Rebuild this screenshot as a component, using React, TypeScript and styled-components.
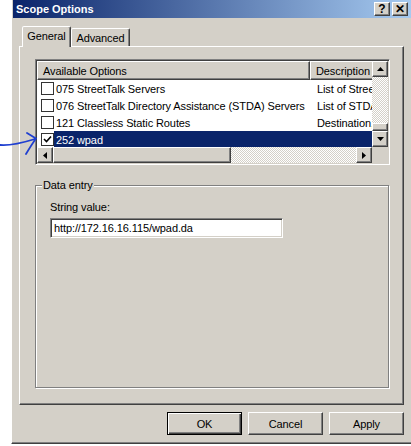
import styled, { createGlobalStyle } from "styled-components";

const GlobalStyle = createGlobalStyle`
  html, body { margin: 0; padding: 0; background: #fff; }
  body {
    font-family: "Liberation Sans", Arial, sans-serif;
    font-size: 11px;
    color: #000;
  }
  * { box-sizing: border-box; }
`;

const raised = `
  background: #d4d0c8;
  border: 1px solid;
  border-color: #fff #404040 #404040 #fff;
  box-shadow: inset -1px -1px #808080;
`;

const sunken = `
  border: 1px solid;
  border-color: #808080 #fff #fff #808080;
  box-shadow: inset 1px 1px #404040, inset -1px -1px #d4d0c8;
  padding: 1px;
`;

const Page = styled.div`
  position: relative;
  width: 411px;
  height: 446px;
  overflow: hidden;
  padding-left: 11px;
`;

const Window = styled.div`
  width: 400px;
  height: 444px;
  background: #d4d0c8;
  border-left: 1px solid #fff;
  border-bottom: 1px solid #404040;
  box-shadow: inset 0 -1px #808080;
  padding-left: 1px;
  display: flex;
  flex-direction: column;
`;

const TitleBar = styled.div`
  height: 18px;
  display: flex;
  align-items: center;
  padding: 0 3px;
  background: linear-gradient(to right, #0a246a, #a6caf0);
`;

const Title = styled.span`
  color: #fff;
  font-weight: bold;
  font-size: 11px;
`;

const TitleButtons = styled.div`
  margin-left: auto;
  display: flex;
  gap: 2px;
`;

const TitleButton = styled.div`
  ${raised}
  width: 16px;
  height: 14px;
  display: flex;
  align-items: center;
  justify-content: center;
  font-weight: bold;
  font-size: 12px;
  line-height: 1;
  padding-bottom: 1px;
`;

const Content = styled.div`
  padding: 8px 7px 0 6px;
  display: flex;
  flex-direction: column;
  letter-spacing: -0.1px;
`;

const TabRow = styled.div`
  height: 20px;
  display: flex;
  align-items: flex-end;
  padding-left: 3px;
`;

const Tab = styled.div<{ $active?: boolean; $w: number }>`
  position: relative;
  z-index: ${(p) => (p.$active ? 1 : 0)};
  width: ${(p) => p.$w}px;
  height: ${(p) => (p.$active ? 21 : 18)}px;
  margin-bottom: ${(p) => (p.$active ? -1 : 0)}px;
  background: #d4d0c8;
  border: 1px solid;
  border-bottom: none;
  border-color: #fff #404040 transparent #fff;
  border-radius: 2px 2px 0 0;
  box-shadow: inset -1px 0 #808080;
  display: flex;
  align-items: center;
  justify-content: center;
  padding-bottom: ${(p) => (p.$active ? 2 : 0)}px;
`;

const Panel = styled.div`
  width: 385px;
  height: 359px;
  background: #d4d0c8;
  border: 1px solid;
  border-color: #fff #404040 #404040 #fff;
  box-shadow: inset -1px -1px #808080;
  padding: 12px 13px 0 15px;
  display: flex;
  flex-direction: column;
`;

const ListView = styled.div`
  ${sunken}
  width: 355px;
  height: 106px;
  display: grid;
  grid-template-columns: 1fr 16px;
  grid-template-rows: 1fr 16px;
`;

const ListBody = styled.div`
  background: #fff;
  overflow: hidden;
  display: flex;
  flex-direction: column;
`;

const HeaderRow = styled.div`
  display: flex;
  height: 19px;
  flex-shrink: 0;
`;

const HeaderCell = styled.div<{ $w: number }>`
  ${raised}
  width: ${(p) => p.$w}px;
  flex-shrink: 0;
  padding-left: 5px;
  display: flex;
  align-items: center;
  white-space: nowrap;
  overflow: hidden;
`;

const Row = styled.div`
  display: flex;
  height: 17px;
  flex-shrink: 0;
`;

const CheckCell = styled.div`
  width: 17px;
  flex-shrink: 0;
  display: flex;
  align-items: center;
  padding-left: 4px;
`;

const Box = styled.div`
  width: 13px;
  height: 13px;
  border: 1px solid #333;
  background: #fff;
  display: flex;
  align-items: center;
  justify-content: center;
`;

const Cell = styled.div<{ $w: number; $pad: number; $sel?: boolean }>`
  width: ${(p) => p.$w}px;
  flex-shrink: 0;
  padding-left: ${(p) => p.$pad}px;
  display: flex;
  align-items: center;
  white-space: nowrap;
  overflow: hidden;
  background: ${(p) => (p.$sel ? "#0a246a" : "transparent")};
  color: ${(p) => (p.$sel ? "#fff" : "#000")};
`;

const VScroll = styled.div`
  display: flex;
  flex-direction: column;
`;

const HScroll = styled.div`
  display: flex;
`;

const ScrollBtn = styled.div`
  ${raised}
  width: 16px;
  height: 16px;
  flex-shrink: 0;
  display: flex;
  align-items: center;
  justify-content: center;
`;

const Track = styled.div`
  flex: 1;
  background: repeating-conic-gradient(#fff 0 25%, #d4d0c8 0 50%) 0 0 / 2px 2px;
`;

const Thumb = styled.div<{ $w?: number; $h?: number }>`
  ${raised}
  flex-shrink: 0;
  width: ${(p) => (p.$w ? `${p.$w}px` : "auto")};
  height: ${(p) => (p.$h ? `${p.$h}px` : "auto")};
`;

const Corner = styled.div`
  background: #d4d0c8;
`;

const GroupBox = styled.div`
  position: relative;
  margin-top: 20px;
  width: 354px;
  height: 203px;
  border: 1px solid #808080;
  box-shadow: inset 1px 1px #fff, 1px 1px #fff;
  padding: 15px 14px;
`;

const GroupTitle = styled.span`
  position: absolute;
  top: -7px;
  left: 6px;
  padding: 0 1px;
  background: #d4d0c8;
  line-height: 13px;
`;

const FieldLabel = styled.div`
  line-height: 13px;
`;

const TextBox = styled.div`
  ${sunken}
  margin-top: 4px;
  width: 233px;
  height: 20px;
  background: #fff;
  padding-left: 3px;
  display: flex;
  align-items: center;
  white-space: nowrap;
`;

const ButtonRow = styled.div`
  margin-top: 7px;
  display: flex;
  justify-content: flex-end;
  gap: 6px;
`;

const Button = styled.div<{ $default?: boolean }>`
  width: 75px;
  height: 23px;
  background: #d4d0c8;
  display: flex;
  align-items: center;
  justify-content: center;
  border: 1px solid;
  border-color: ${(p) => (p.$default ? "#000" : "#fff #404040 #404040 #fff")};
  box-shadow: ${(p) =>
    p.$default
      ? "inset 1px 1px #fff, inset -1px -1px #404040, inset -2px -2px #808080"
      : "inset -1px -1px #808080"};
`;

const Arrow = styled.svg`
  position: absolute;
  left: 0;
  top: 128px;
`;

type Dir = "up" | "down" | "left" | "right";
const tri: Record<Dir, string> = {
  up: "0,4 3.5,0 7,4",
  down: "0,0 7,0 3.5,4",
  left: "4,0 4,7 0,3.5",
  right: "0,0 0,7 4,3.5",
};

const Triangle = ({ dir }: { dir: Dir }) => {
  const vert = dir === "up" || dir === "down";
  return (
    <svg width={vert ? 7 : 4} height={vert ? 4 : 7}>
      <polygon points={tri[dir]} fill="#000" />
    </svg>
  );
};

const Check = () => (
  <svg width="9" height="9" viewBox="0 0 9 9">
    <path d="M1 4 L3.5 6.5 L8 1.5" stroke="#000" strokeWidth="1.6" fill="none" />
  </svg>
);

const options = [
  { name: "075 StreetTalk Servers", desc: "List of Street", checked: false },
  { name: "076 StreetTalk Directory Assistance (STDA) Servers", desc: "List of STDA", checked: false },
  { name: "121 Classless Static Routes", desc: "Destination,", checked: false },
  { name: "252 wpad", desc: "", checked: true },
];

export default function App() {
  return (
    <>
      <GlobalStyle />
      <Page>
        <Window>
          <TitleBar>
            <Title>Scope Options</Title>
            <TitleButtons>
              <TitleButton>?</TitleButton>
              <TitleButton>✕</TitleButton>
            </TitleButtons>
          </TitleBar>
          <Content>
            <TabRow>
              <Tab $active $w={49}>General</Tab>
              <Tab $w={59}>Advanced</Tab>
            </TabRow>
            <Panel>
              <ListView>
                <ListBody>
                  <HeaderRow>
                    <HeaderCell $w={273}>Available Options</HeaderCell>
                    <HeaderCell $w={70}>Description</HeaderCell>
                  </HeaderRow>
                  {options.map((o) => (
                    <Row key={o.name}>
                      <CheckCell>
                        <Box>{o.checked && <Check />}</Box>
                      </CheckCell>
                      <Cell $w={256} $pad={2} $sel={o.checked}>
                        {o.name}
                      </Cell>
                      <Cell $w={62} $pad={7} $sel={o.checked}>
                        {o.desc}
                      </Cell>
                    </Row>
                  ))}
                </ListBody>
                <VScroll>
                  <ScrollBtn>
                    <Triangle dir="up" />
                  </ScrollBtn>
                  <Track />
                  <Thumb $h={8} />
                  <ScrollBtn>
                    <Triangle dir="down" />
                  </ScrollBtn>
                </VScroll>
                <HScroll>
                  <ScrollBtn>
                    <Triangle dir="left" />
                  </ScrollBtn>
                  <Thumb $w={178} />
                  <Track />
                  <ScrollBtn>
                    <Triangle dir="right" />
                  </ScrollBtn>
                </HScroll>
                <Corner />
              </ListView>
              <GroupBox>
                <GroupTitle>Data entry</GroupTitle>
                <FieldLabel>String value:</FieldLabel>
                <TextBox>http://172.16.16.115/wpad.da</TextBox>
              </GroupBox>
            </Panel>
            <ButtonRow>
              <Button $default>OK</Button>
              <Button>Cancel</Button>
              <Button>Apply</Button>
            </ButtonRow>
          </Content>
        </Window>
        <Arrow width="40" height="30" viewBox="0 0 40 30">
          <path
            d="M0 17 C10 18 22 15 35 11 M27 5 L36 10.5 M36 10.5 C32 16 29 21 26 26"
            stroke="#1f3fd0"
            strokeWidth="1.8"
            fill="none"
            strokeLinecap="round"
          />
        </Arrow>
      </Page>
    </>
  );
}
